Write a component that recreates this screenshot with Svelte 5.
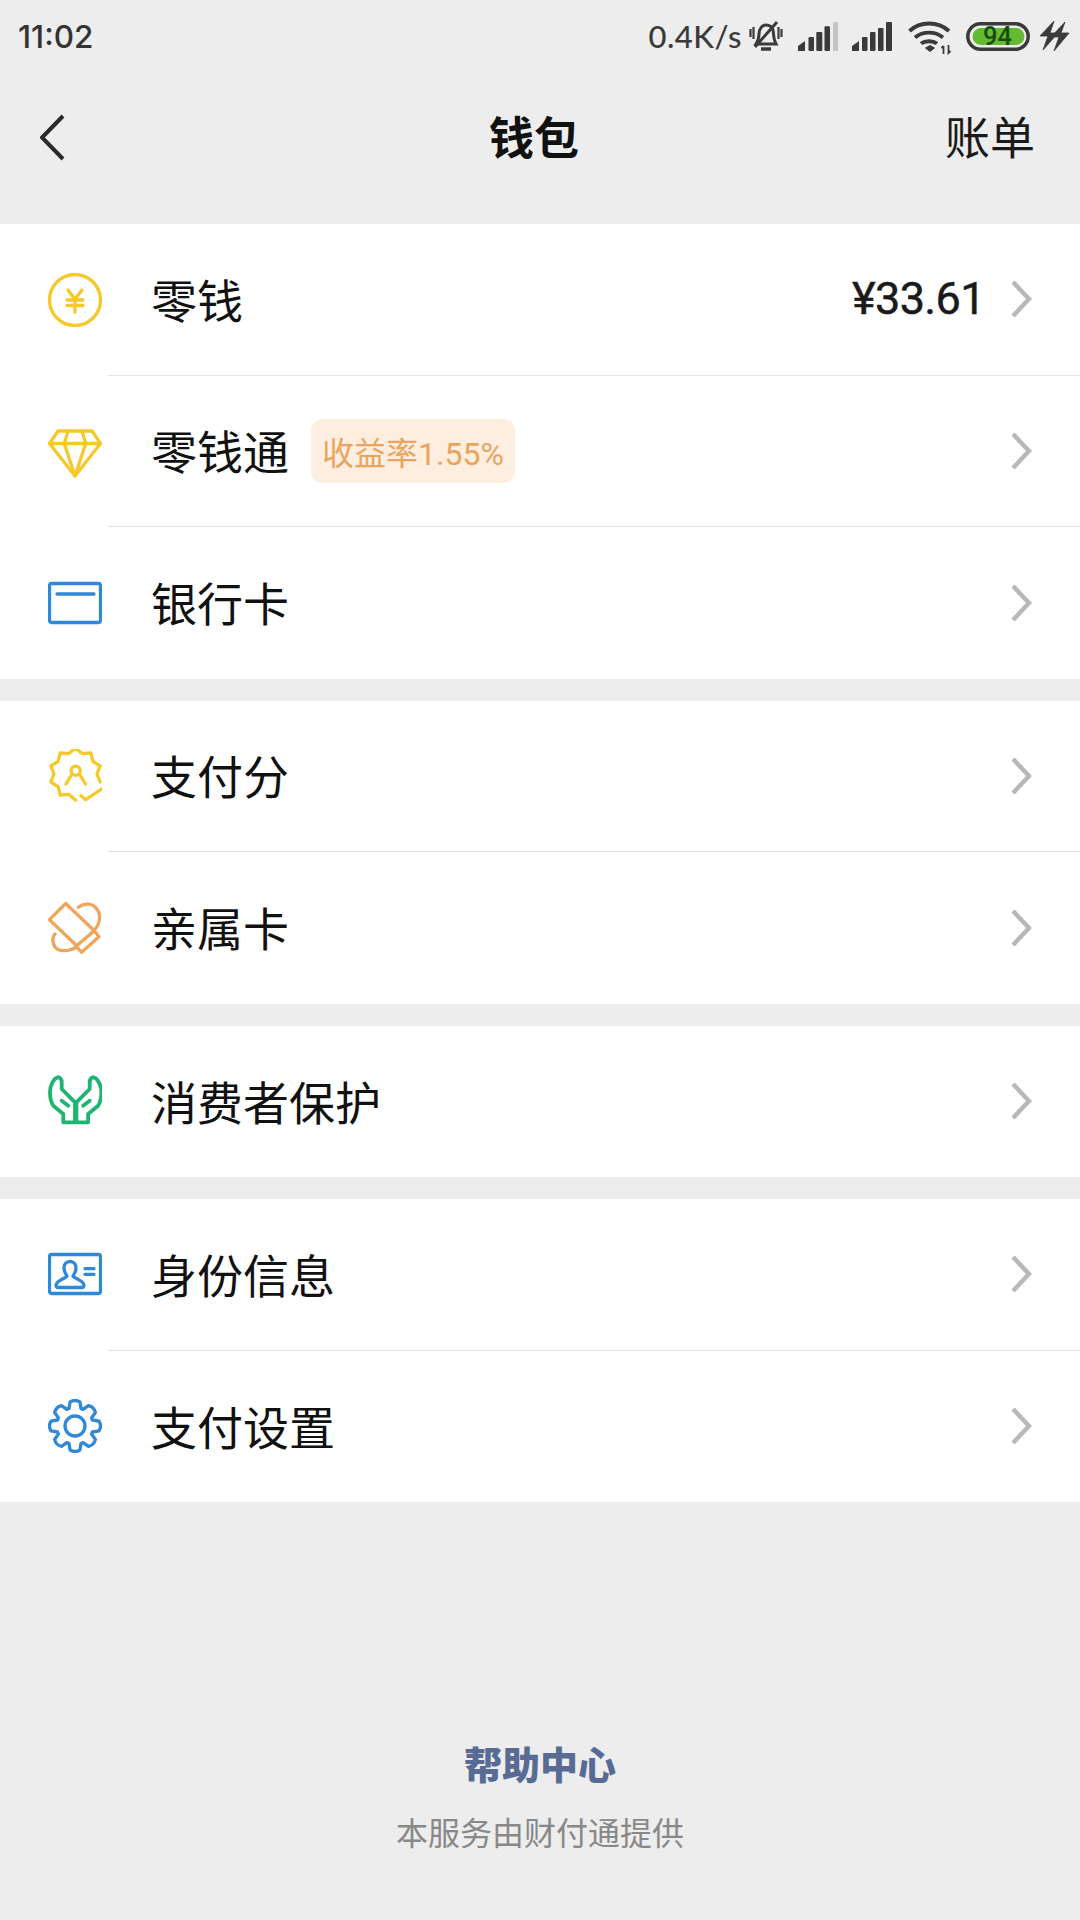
<script>
  const yellow = '#f5c92b';
  const blue = '#2f88d8';
  const handOutline = 'M9.7 3.3C6 4 2 11 2 18.3c0 6 1 10 3.300 13.400l10 8.300v8.300H27V28.300L13.700 15V8.300c0-3-2-5.300-4-5z';

  // outline of the pay-score badge, open at the lower right where the tick sits
  function badgePath() {
    const cx = 27.5, cy = 25, points = 10;
    const pts = [];
    for (let i = 0; i <= points * 2; i++) {
      const a = -Math.PI / 2 + (i * Math.PI) / points;
      const r = i % 2 ? 21.5 : 26;
      const deg = ((a * 180) / Math.PI + 360) % 360;
      if (deg > 25 && deg < 80) continue;
      pts.push([cx + r * Math.cos(a), cy + r * Math.sin(a), i]);
    }
    const start = pts.findIndex((p, n) => n > 0 && p[2] - pts[n - 1][2] > 1);
    const ordered = [...pts.slice(start), ...pts.slice(0, start)];
    return 'M' + ordered.map((p) => `${p[0].toFixed(1)} ${p[1].toFixed(1)}`).join('L');
  }

  function gearPath() {
    const cx = 27, cy = 27, teeth = 8;
    let d = '';
    for (let i = 0; i < teeth; i++) {
      const a = -Math.PI / 2 + (i * 2 * Math.PI) / teeth;
      const at = (r, off) => `${(cx + r * Math.cos(a + off)).toFixed(1)} ${(cy + r * Math.sin(a + off)).toFixed(1)}`;
      d += `${i ? 'L' : 'M'}${at(18.5, -0.33)}L${at(24.5, -0.2)}Q${at(27, 0)} ${at(24.5, 0.2)}L${at(18.5, 0.33)}`;
    }
    return d + 'Z';
  }

  const groups = [
    [
      { icon: 'coin', label: '零钱', value: '¥33.61' },
      { icon: 'diamond', label: '零钱通', badge: '收益率1.55%' },
      { icon: 'card', label: '银行卡' }
    ],
    [
      { icon: 'score', label: '支付分' },
      { icon: 'family', label: '亲属卡' }
    ],
    [{ icon: 'hands', label: '消费者保护' }],
    [
      { icon: 'id', label: '身份信息' },
      { icon: 'gear', label: '支付设置' }
    ]
  ];
</script>

<div class="page">
  <div class="status">
    <span class="time">11:02</span>
    <div class="status-right">
      <span class="speed">0.4K/s</span>
      <svg class="s-bell" width="34" height="34" viewBox="0 0 34 34" fill="none" stroke="#3a3a3a" stroke-width="3">
        <path d="M7 25c2-3 3-5 3-10 0-5 3-9 7-9 3 0 6 2 7 5 1 5 0 9 3 14z" />
        <path d="M12 30h10" stroke-width="3.500" />
        <path d="M6 28L28 3" />
        <path d="M1.500 10v8M4.500 8v12M29.500 8v12M32.500 10v8" stroke-width="2.200" />
      </svg>
      <svg class="s-sig" width="40" height="29" viewBox="0 0 40 29" fill="#3a3a3a">
        <path d="M0 24l7-5v10H0z" />
        <rect x="10.500" y="15" width="5.500" height="14" rx="1" />
        <rect x="18.300" y="10" width="6" height="19" rx="1" />
        <rect x="26.500" y="4.300" width="5.500" height="24.700" rx="1" />
        <rect x="35" y="0" width="5" height="29" rx="1" fill="#c4c4c4" />
      </svg>
      <svg class="s-sig2" width="40" height="29" viewBox="0 0 40 29" fill="#3a3a3a">
        <path d="M0 24l7-5v10H0z" />
        <rect x="10" y="15" width="5.500" height="14" rx="1" />
        <rect x="18" y="10" width="5.500" height="19" rx="1" />
        <rect x="26" y="6" width="5.500" height="23" rx="1" />
        <rect x="34" y="0" width="6" height="29" rx="1" />
      </svg>
      <svg class="s-wifi" width="44" height="34" viewBox="0 0 44 34" fill="none" stroke="#3a3a3a" stroke-width="3.800">
        <path d="M1.500 10C12 0 30 0 41 10" />
        <path d="M7 16.500c8-6.500 20-6.500 28 0" />
        <path d="M13 22.500c4-3 12-3 16 0" />
        <path d="M17.500 27l4.500-2.500 4.500 2.500-4.500 3.500z" fill="#3a3a3a" stroke-width="1" />
        <path d="M35.500 25v8M33.500 27l2-2M40.500 24v8l2-2" stroke-width="1.800" />
      </svg>
      <svg class="s-batt" width="64" height="29" viewBox="0 0 64 29">
        <rect x="1.800" y="1.800" width="60.400" height="25.400" rx="12.700" fill="none" stroke="#3a3a3a" stroke-width="3.500" />
        <path d="M15 6h35a8.500 8.500 0 0 1 0 17H15a8.500 8.500 0 0 1 0-17z" fill="#62bb30" />
      </svg>
      <span class="batt-num">94</span>
      <svg class="s-bolt" width="30" height="30" viewBox="0 0 30 30" fill="#3a3a3a" stroke="#3a3a3a" stroke-width="0.8">
        <path d="M14 0L0 15h8L3 29l15-17h-8z" />
        <path d="M25 1L11 16h8l-5 14 15-18h-8z" />
      </svg>
    </div>
  </div>

  <header class="nav">
    <svg class="back" width="26" height="48" viewBox="0 0 26 48" fill="none" stroke="#2a2a2a" stroke-width="4">
      <path d="M23 2L2 23.500 23 45" />
    </svg>
    <h1>钱包</h1>
    <span class="bill">账单</span>
  </header>

  {#each groups as group}
    <section class="group">
      {#each group as row}
        <div class="row">
          <svg class="icon" width="54" height="54" viewBox="0 0 54 54" fill="none" stroke-width="3.300" stroke-linecap="round" stroke-linejoin="round">
            {#if row.icon === 'coin'}
              <g stroke={yellow}>
                <circle cx="27" cy="27" r="25.500" />
                <path d="M20 17l7 9 7-9M27 26v13M19 27h16M19 32.500h16" />
              </g>
            {:else if row.icon === 'diamond'}
              <g stroke={yellow}>
                <path d="M10 7h34l8.500 12.500L27 52 1.500 19.500z" />
                <path d="M1.500 19.500h51M20 7l-3.700 12.500L27 52l10.700-32.500L34 7" />
              </g>
            {:else if row.icon === 'card'}
              <g stroke={blue}>
                <rect x="1.500" y="7.500" width="51" height="39" rx="2" />
                <path d="M9 18h37" />
              </g>
            {:else if row.icon === 'score'}
              <g stroke={yellow}>
                <path d={badgePath()} />
                <circle cx="27.700" cy="21.700" r="4.600" />
                <path d="M23 26.700l-5 8.300M32.500 26.700l5 8.300M33 46.700l4.700 4L53.700 40" />
              </g>
            {:else if row.icon === 'family'}
              <g stroke="#eda65c">
                <path d="M17.700 2.500L1.500 18.700l27.200 26 17.600-15z" />
                <path d="M28.700 46l5 5.300L51 35.700l-4.700-6" />
                <path d="M30.300 6.300C36 2 44 2 48 7c5 5 5 15-1.700 22" />
                <path d="M7 33c-4 5-2 13 3 15.500 6 2.500 14 .5 18.700-2.500" />
              </g>
            {:else if row.icon === 'hands'}
              <g stroke="#1fb472" stroke-width="3.800">
                <path d={handOutline} />
                <path d="M13.700 26.700l6.600 5" />
                <g transform="translate(55.400 0) scale(-1 1)">
                  <path d={handOutline} />
                  <path d="M13.700 26.700l6.600 5" />
                </g>
              </g>
            {:else if row.icon === 'id'}
              <g stroke={blue}>
                <rect x="1.500" y="6.500" width="51" height="39" rx="2" />
                <path d="M22 13.500c-4 0-6 3-6 6.500 0 4 2 6 3 8 0 2-10 4-11 9 0 2 1 2.500 2 2.500h24c1 0 2-.5 2-2.500-1-5-11-7-11-9 1-2 3-4 3-8 0-3.500-2-6.500-6-6.500z" />
                <path d="M37 20.700h9M37 26.300h9" />
              </g>
            {:else if row.icon === 'gear'}
              <g stroke={blue}>
                <path d={gearPath()} />
                <circle cx="27" cy="27" r="10" />
              </g>
            {/if}
          </svg>
          <div class="cell">
            <span class="label">{row.label}</span>
            {#if row.badge}<span class="badge">{row.badge}</span>{/if}
            {#if row.value}<span class="value">{row.value}</span>{/if}
            <svg class="chevron" width="22" height="38" viewBox="0 0 22 38" fill="none" stroke="#b8b8b8" stroke-width="4.500">
              <path d="M3 2l16 17L3 36" />
            </svg>
          </div>
        </div>
      {/each}
    </section>
  {/each}

  <footer class="foot">
    <span class="help">帮助中心</span>
    <span class="provider">本服务由财付通提供</span>
  </footer>
</div>

<style>
  :global(body) {
    margin: 0;
    background: #ededed;
  }

  .page {
    display: flex;
    flex-direction: column;
    height: 1920px;
    background: #ededed;
    font-family: "Noto Sans CJK SC", "Noto Sans", sans-serif;
    color: #111;
  }

  .status {
    display: flex;
    align-items: center;
    justify-content: space-between;
    height: 72px;
    padding: 0 10px 0 18px;
    flex-shrink: 0;
  }

  .time {
    font-family: Inter, sans-serif;
    font-size: 31.500px;
    font-weight: 500;
    color: #333;
  }

  .status-right {
    display: flex;
    align-items: center;
    position: relative;
    color: #3a3a3a;
  }

  .speed {
    font-family: Lato, sans-serif;
    font-size: 31px;
    font-weight: 500;
    letter-spacing: 0.5px;
    margin-right: 7px;
  }

  .s-sig { margin-left: 15px; }
  .s-sig2 { margin-left: 14px; }
  .s-wifi { margin-left: 16px; margin-top: 4px; }
  .s-batt { margin-left: 14px; }
  .s-bolt { margin-left: 10px; }

  .batt-num {
    position: absolute;
    right: 58px;
    font-family: Roboto, sans-serif;
    font-size: 25.500px;
    font-weight: 500;
    color: #1a4d0c;
  }

  .nav {
    display: flex;
    align-items: center;
    justify-content: space-between;
    height: 132px;
    padding: 0 45px 6px 40px;
    box-sizing: border-box;
    position: relative;
    margin-bottom: 20px;
    flex-shrink: 0;
  }

  .back {
    margin-top: 6px;
  }

  .nav h1 {
    position: absolute;
    left: 0;
    right: 0;
    margin: 0;
    text-align: center;
    font-size: 45px;
    font-weight: 700;
    line-height: 1;
    transform: translateX(-6px);
    pointer-events: none;
  }

  .bill {
    font-size: 45px;
    line-height: 1;
    color: #1a1a1a;
  }

  .group {
    background: #fff;
    margin-bottom: 22px;
    flex-shrink: 0;
  }

  .row {
    display: flex;
    align-items: stretch;
    height: 151.500px;
    padding-left: 48px;
  }

  .icon {
    align-self: center;
    flex-shrink: 0;
    margin-right: 6px;
  }

  .cell {
    flex: 1;
    display: flex;
    align-items: center;
    padding: 0 48px 0 43px;
    border-bottom: 1px solid #e2e2e2;
  }

  .row:last-child .cell {
    border-bottom: none;
  }

  .label {
    font-size: 46px;
    line-height: 1;
    color: #111;
    padding-bottom: 3px;
  }

  .badge {
    margin-left: 22px;
    padding: 0 11px;
    height: 64px;
    display: flex;
    align-items: center;
    background: #fdeee0;
    border-radius: 12px;
    font-family: Roboto, "Noto Sans CJK SC", sans-serif;
    font-size: 32px;
    color: #e9a45e;
  }

  .value {
    margin-left: auto;
    font-family: Roboto, sans-serif;
    font-size: 45px;
    font-weight: 400;
    -webkit-text-stroke: 0.5px #1a1a1a;
    letter-spacing: -0.6px;
    color: #1a1a1a;
    padding-bottom: 1px;
  }

  .chevron {
    margin-left: auto;
    flex-shrink: 0;
  }

  .value + .chevron {
    margin-left: 25px;
  }

  .foot {
    margin-top: auto;
    padding-bottom: 73px;
    display: flex;
    flex-direction: column;
    align-items: center;
  }

  .help {
    font-size: 38px;
    font-weight: 900;
    line-height: 1;
    color: #576b95;
    margin-bottom: 33px;
  }

  .provider {
    font-size: 32px;
    line-height: 1;
    color: #888;
  }
</style>
